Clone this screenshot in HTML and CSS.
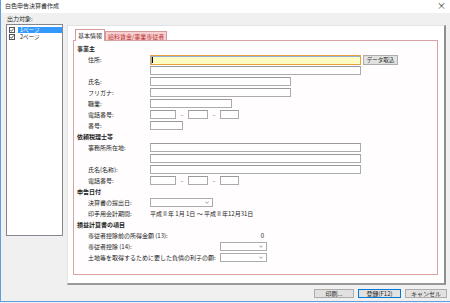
FILE: index.html
```
<!DOCTYPE html>
<html lang="ja">
<head>
    <meta charset="UTF-8">
    <title>白色申告決算書作成</title>
    <link rel="stylesheet" href="styles.css">
</head>
<body>
    <div class="ventana">
        <div class="barra-titulo">
            <span class="titulo">白色申告決算書作成</span>
            <span class="cerrar">×</span>
        </div>
        <div class="principal">
            <div class="lateral">
                <div class="lateral-etiqueta">出力対象:</div>
                <ul class="paginas">
                    <li class="activa"><span class="check"><svg viewBox="0 0 6 6"><rect x="0.5" y="0.5" width="5" height="5" fill="#fff" stroke="#555"/><polyline points="1.3,3 2.5,4.3 4.7,1.5" fill="none" stroke="#333" stroke-width="0.8"/></svg></span><span class="pag-texto">1ページ</span></li>
                    <li><span class="check"><svg viewBox="0 0 6 6"><rect x="0.5" y="0.5" width="5" height="5" fill="#fff" stroke="#555"/><polyline points="1.3,3 2.5,4.3 4.7,1.5" fill="none" stroke="#333" stroke-width="0.8"/></svg></span><span class="pag-texto">2ページ</span></li>
                </ul>
            </div>
            <div class="panel">
                <div class="pestanas">
                    <div class="pestana activa">基本情報</div>
                    <div class="pestana">給料賃金/事業専従者</div>
                </div>
                <div class="contenido">
                    <div class="seccion">事業主</div>
                    <div class="fila"><span class="etiqueta">住所:</span><span class="campo largo foco"><span class="cursor"></span></span><button class="boton-datos">データ取込</button></div>
                    <div class="fila"><span class="etiqueta"></span><span class="campo largo"></span></div>
                    <div class="fila"><span class="etiqueta">氏名:</span><span class="campo medio"></span></div>
                    <div class="fila"><span class="etiqueta">フリガナ:</span><span class="campo medio"></span></div>
                    <div class="fila"><span class="etiqueta">職業:</span><span class="campo corto"></span></div>
                    <div class="fila"><span class="etiqueta">電話番号:</span><span class="campo tel1"></span><span class="guion">-</span><span class="campo tel2"></span><span class="guion">-</span><span class="campo tel3"></span></div>
                    <div class="fila"><span class="etiqueta">番号:</span><span class="campo numero"></span></div>

                    <div class="seccion">依頼税理士等</div>
                    <div class="fila"><span class="etiqueta">事務所所在地:</span><span class="campo largo"></span></div>
                    <div class="fila"><span class="etiqueta"></span><span class="campo largo"></span></div>
                    <div class="fila"><span class="etiqueta">氏名(名称):</span><span class="campo largo"></span></div>
                    <div class="fila"><span class="etiqueta">電話番号:</span><span class="campo tel1"></span><span class="guion">-</span><span class="campo tel2"></span><span class="guion">-</span><span class="campo tel3"></span></div>

                    <div class="seccion">申告日付</div>
                    <div class="fila"><span class="etiqueta">決算書の提出日:</span><span class="combo fecha"><svg viewBox="0 0 4 3"><polyline points="0.3,0.6 2,2.3 3.7,0.6" fill="none" stroke="#555" stroke-width="0.6"/></svg></span></div>
                    <div class="fila"><span class="etiqueta">印手用会計期間:</span><span class="periodo">平成Ⅱ年 1月 1日 ～ 平成Ⅱ年12月31日</span></div>

                    <div class="seccion">損益計算書の項目</div>
                    <div class="fila"><span class="etiqueta ancha">専従者控除前の所得金額 (13):</span><span class="valor">0</span></div>
                    <div class="fila"><span class="etiqueta ancha">専従者控除 (14):</span><span class="combo importe"><svg viewBox="0 0 4 3"><polyline points="0.3,0.6 2,2.3 3.7,0.6" fill="none" stroke="#555" stroke-width="0.6"/></svg></span></div>
                    <div class="fila"><span class="etiqueta ancha">土地等を取得するために要した負債の利子の額:</span><span class="combo importe"><svg viewBox="0 0 4 3"><polyline points="0.3,0.6 2,2.3 3.7,0.6" fill="none" stroke="#555" stroke-width="0.6"/></svg></span></div>
                </div>
            </div>
        </div>
        <div class="pie">
            <button class="boton imprimir">印刷...</button>
            <button class="boton registrar">登録(F12)</button>
            <button class="boton cancelar">キャンセル</button>
        </div>
    </div>
</body>
</html>
```

FILE: styles.css
```
* {
    box-sizing: border-box;
}
body {
    margin: 0;
    background-color: #f0f0f0;
    font-family: "Noto Sans CJK JP", "Noto Sans", sans-serif;
    font-size: 6px;
    color: #1e1e1e;
}
.ventana {
    width: 450px;
    height: 302px;
    display: flex;
    flex-direction: column;
    background-color: #f0f0f0;
    border-left: 1px solid #5d9fe0;
    border-bottom: 1px solid #5d9fe0;
}
.barra-titulo {
    height: 13px;
    display: flex;
    align-items: center;
    justify-content: space-between;
    padding: 0 4px 2px 4px;
    background-color: #ffffff;
}
.titulo {
    font-size: 6px;
    color: #2a2a2a;
}
.cerrar {
    font-size: 9px;
    line-height: 9px;
    color: #333;
}
.principal {
    height: 272px;
    display: flex;
    gap: 4px;
    padding: 2px 4px 0 5px;
}
.lateral {
    width: 57px;
    display: flex;
    flex-direction: column;
}
.lateral-etiqueta {
    height: 9px;
    line-height: 7px;
    padding-left: 1px;
}
.paginas {
    list-style: none;
    margin: 0;
    padding: 1px 0 0 1px;
    height: 212px;
    background-color: #fff;
    border: 1px solid #828790;
}
.paginas li {
    height: 7px;
    line-height: 6px;
    display: flex;
    align-items: center;
    overflow: hidden;
}
.check {
    width: 7px;
    height: 7px;
    margin: 0 2px 0 1px;
    display: flex;
    align-items: center;
}
.check svg {
    width: 6px;
    height: 6px;
}
.pag-texto {
    flex: 1;
    height: 6px;
    line-height: 6px;
    font-size: 5.5px;
    padding-left: 2px;
    overflow: hidden;
}
.paginas li.activa .pag-texto {
    background-color: #3399ff;
    color: #fff;
}
.panel {
    flex: 1;
    margin-top: 10px;
    display: flex;
    flex-direction: column;
    background-color: #fff;
    border-top: 1px solid #e3e3e3;
    border-left: 1px solid #e3e3e3;
    border-right: 2px solid #8e8e8e;
    border-bottom: 2px solid #999999;
    padding: 1px 6px 8px 5px;
}
.pestanas {
    display: flex;
    align-items: flex-end;
    height: 13px;
    padding-left: 2px;
}
.pestana {
    height: 10px;
    line-height: 9px;
    padding: 0 2px;
    margin-bottom: -1px;
    background-color: #f6d2d2;
    color: #c03030;
    border: 1px solid #d39a9a;
    border-bottom: none;
}
.pestana.activa {
    height: 12px;
    line-height: 11px;
    background-color: #fffdfd;
    color: #1e1e1e;
    position: relative;
    z-index: 1;
}
.contenido {
    flex: 1;
    background-color: #fffdfd;
    border: 1px solid #d9a3a3;
    padding: 2px 3px;
}
.seccion {
    height: 11px;
    line-height: 11px;
    font-weight: bold;
}
.fila {
    height: 11px;
    display: flex;
    align-items: center;
    padding-left: 11px;
}
.etiqueta {
    width: 62px;
    flex-shrink: 0;
}
.etiqueta.ancha {
    width: 132px;
}
.campo {
    height: 9px;
    background-color: #fff;
    border: 1px solid #ababab;
    border-top-color: #9a9a9a;
}
.largo { width: 211px; }
.medio { width: 141px; }
.corto { width: 82px; }
.numero { width: 33px; }
.tel1 { width: 26px; }
.tel2 { width: 20px; }
.tel3 { width: 19px; }
.guion {
    width: 12px;
    text-align: center;
}
.campo.foco {
    height: 10px;
    background-color: #ffffc2;
    border: 1px solid #e9a23b;
    box-shadow: inset 1px 1px 0 #8fb3dc;
    display: flex;
    align-items: center;
    padding-left: 1px;
}
.cursor {
    width: 1px;
    height: 6px;
    background-color: #000;
}
.boton-datos {
    margin-left: 2px;
    width: 35px;
    height: 10px;
    padding: 0;
    font-family: inherit;
    font-size: 5.5px;
    line-height: 8px;
    color: #1e1e1e;
    background-color: #e1e1e1;
    border: 1px solid #adadad;
}
.combo {
    height: 9px;
    display: flex;
    align-items: center;
    justify-content: flex-end;
    padding-right: 3px;
    background-color: #fff;
    border: 1px solid #ababab;
}
.combo svg {
    width: 4px;
    height: 3px;
}
.fecha { width: 63px; }
.importe { width: 47px; }
.periodo {
    white-space: nowrap;
}
.valor {
    width: 44px;
    text-align: right;
}
.pie {
    flex: 1;
    display: flex;
    justify-content: flex-end;
    align-items: flex-start;
    gap: 4px;
    padding: 4px 3px 0 0;
}
.boton {
    height: 9px;
    padding: 0;
    font-family: inherit;
    font-size: 6px;
    line-height: 7px;
    color: #1e1e1e;
    background-color: #e1e1e1;
    border: 1px solid #adadad;
}
.imprimir { width: 40px; }
.registrar {
    width: 43px;
    border-color: #0078d7;
}
.cancelar { width: 42px; }
```
